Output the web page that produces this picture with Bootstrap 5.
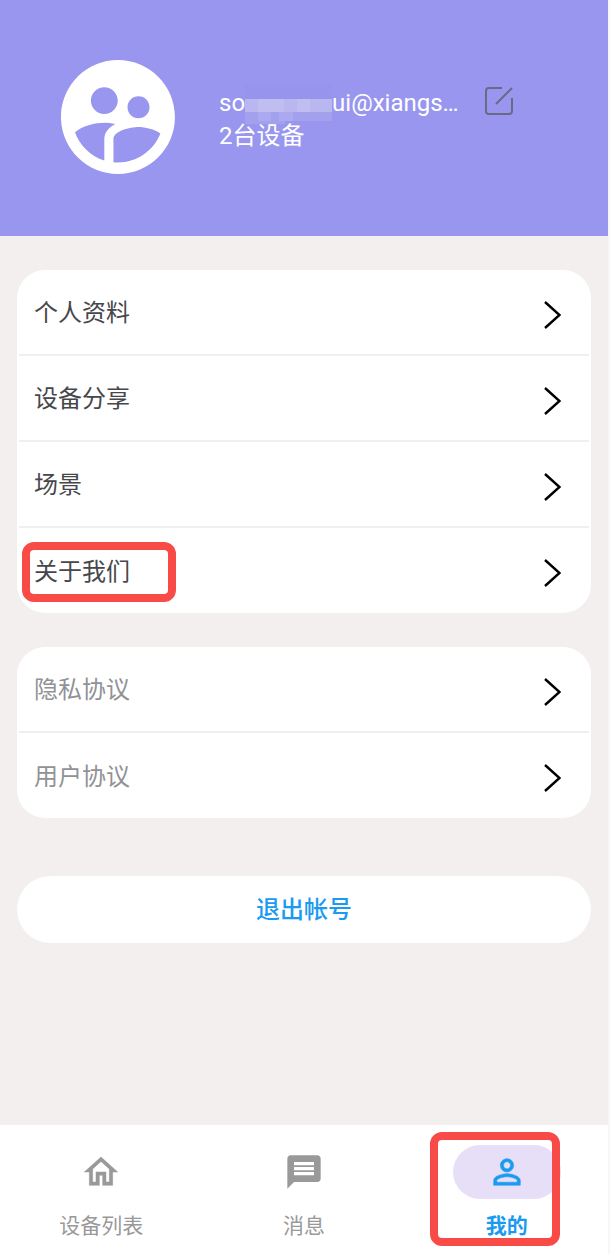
<!DOCTYPE html>
<html lang="zh-CN">
<head>
<meta charset="utf-8">
<meta name="viewport" content="width=device-width, initial-scale=1">
<title>我的</title>
<link rel="stylesheet" href="https://cdn.jsdelivr.net/npm/bootstrap@5.3.0/dist/css/bootstrap.min.css">
<style>
  body { font-family: Roboto, "Noto Sans CJK SC", sans-serif; font-size: 24px; line-height: 33px; background: #f7f7f8; }
  .screen { background: #f3efef; margin-right: 2px; }
  .hero { background: #9896ee; padding: 60px 61px 62px; }
  .avatar { width: 114px; height: 114px; margin-right: 44px; }
  .hero-col { padding-top: 27px; }
  .mask { width: 87px; height: 40px; margin: -10px 0; vertical-align: -3px; }
  .edit-btn { width: 28px; height: 28px; margin-left: 26px; color: #6b6a86; }
  .content { padding: 34px 17px; }
  .menu { border-radius: 28px; background: #fff; padding: 0 2px; margin-bottom: 34px; }
  .menu-row { height: 86px; padding: 3px 28px 0 15px; color: #47474b; border-bottom: 2px solid #efefef; }
  .menu-row:last-child { height: 85px; border-bottom: 0; }
  .menu-muted .menu-row { color: #919295; }
  .menu-row svg { width: 18px; height: 28px; color: #000; margin-top: 2px; }
  .logout { height: 67px; margin-top: 24px; border-radius: 34px; background: #fff; color: #1a9bf0; font-size: 24px; font-weight: 500; }
  .logout:hover { background: #fff; color: #1a9bf0; }
  .tabs { background: #fff; height: 130px; border-top: 1px solid #f0f0f2; padding-top: 20px; font-size: 21px; line-height: 30px; }
  .tab-link { color: #999; gap: 12px; }
  .tab-link.active { color: #1a9bf0; font-weight: 700; }
  .tab-icon { width: 108px; height: 54px; border-radius: 27px; }
  .active .tab-icon { background: #e7dff7; }
  .tab-icon svg { width: 40px; height: 40px; }
  .marker { border: 8px solid #f84b47; border-radius: 12px; pointer-events: none; }
  .marker-about { left: 3px; top: 14px; width: 154px; height: 60px; }
  .marker-me { left: 50%; top: -13px; width: 130px; height: 114px; margin-left: -77px; }
</style>
</head>
<body>
<div class="screen min-vh-100 d-flex flex-column">
  <header class="hero d-flex">
    <svg class="avatar flex-shrink-0" viewBox="2 2 20 20" fill="#fff" aria-hidden="true"><path d="M11.99 2c-5.52 0-10 4.48-10 10s4.48 10 10 10 10-4.48 10-10-4.48-10-10-10zm3.61 6.34c1.07 0 1.93.86 1.93 1.93 0 1.07-.86 1.93-1.93 1.93-1.07 0-1.93-.86-1.93-1.93-.01-1.07.86-1.93 1.93-1.93zm-6-1.58c1.3 0 2.36 1.06 2.36 2.36 0 1.3-1.06 2.36-2.36 2.36s-2.36-1.06-2.36-2.36c0-1.31 1.05-2.36 2.36-2.36zm0 9.13v3.75c-2.4-.75-4.3-2.6-5.14-4.96 1.05-1.12 3.67-1.69 5.14-1.69.53 0 1.2.08 1.9.22-1.64.87-1.9 2.02-1.9 2.68zM11.99 20c-.27 0-.53-.01-.79-.04v-4.07c0-1.42 2.94-2.13 4.4-2.13 1.07 0 2.92.39 3.84 1.15-1.17 2.97-4.06 5.09-7.45 5.09z"/></svg>
    <div class="hero-col text-white text-nowrap">
      <div>so<svg class="mask" viewBox="0 0 87 40" shape-rendering="crispEdges" aria-hidden="true"><path fill="#9694ec" d="M0 0h87v15H0z"/><path fill="#b9b6f0" d="M0 15h87v13H0z"/><path fill="#c0bdf1" d="M13 15h26v13H13zM52 15h13v13H52z"/><path fill="#a3a1ee" d="M0 28h87v9H40v3H0z"/><path fill="#aba9ef" d="M13 28h13v9H13zM34 28h14v9H34z"/></svg>ui@xiangs…</div>
      <div>2台设备</div>
    </div>
    <div class="hero-col"><button type="button" class="edit-btn btn border-0 p-0 d-block" aria-label="编辑"><svg class="d-block" width="28" height="28" viewBox="0 0 28 28" fill="none" stroke="currentColor" stroke-width="2"><path d="M17 1H4a3 3 0 0 0-3 3v20a3 3 0 0 0 3 3h20a3 3 0 0 0 3-3V11M11 17 27 1"/></svg></button></div>
  </header>

  <main class="content flex-grow-1">
    <nav class="menu">
      <a href="#" class="menu-row d-flex align-items-center justify-content-between text-decoration-none">个人资料<svg viewBox="0 0 18 28" fill="none" stroke="currentColor" stroke-width="2.4"><path d="M2 1 16.500 14 2 27"/></svg></a>
      <a href="#" class="menu-row d-flex align-items-center justify-content-between text-decoration-none">设备分享<svg viewBox="0 0 18 28" fill="none" stroke="currentColor" stroke-width="2.4"><path d="M2 1 16.500 14 2 27"/></svg></a>
      <a href="#" class="menu-row d-flex align-items-center justify-content-between text-decoration-none">场景<svg viewBox="0 0 18 28" fill="none" stroke="currentColor" stroke-width="2.4"><path d="M2 1 16.500 14 2 27"/></svg></a>
      <a href="#" class="menu-row position-relative d-flex align-items-center justify-content-between text-decoration-none">关于我们<svg viewBox="0 0 18 28" fill="none" stroke="currentColor" stroke-width="2.4"><path d="M2 1 16.500 14 2 27"/></svg><span class="marker marker-about position-absolute"></span></a>
    </nav>
    <nav class="menu menu-muted">
      <a href="#" class="menu-row d-flex align-items-center justify-content-between text-decoration-none">隐私协议<svg viewBox="0 0 18 28" fill="none" stroke="currentColor" stroke-width="2.4"><path d="M2 1 16.500 14 2 27"/></svg></a>
      <a href="#" class="menu-row d-flex align-items-center justify-content-between text-decoration-none">用户协议<svg viewBox="0 0 18 28" fill="none" stroke="currentColor" stroke-width="2.4"><path d="M2 1 16.500 14 2 27"/></svg></a>
    </nav>
    <button type="button" class="logout btn border-0 w-100">退出帐号</button>
  </main>

  <nav class="tabs row g-0">
    <div class="col-4"><a href="#" class="tab-link d-flex flex-column align-items-center text-decoration-none">
      <span class="tab-icon d-flex align-items-center justify-content-center"><svg viewBox="0 0 24 24" fill="currentColor" stroke="currentColor" stroke-width=".3"><path d="M12 5.69l5 4.5V18h-2v-6H9v6H7v-7.81l5-4.5M12 3L2 12h3v8h6v-6h2v6h6v-8h3L12 3z"/></svg></span>设备列表</a></div>
    <div class="col-4"><a href="#" class="tab-link d-flex flex-column align-items-center text-decoration-none">
      <span class="tab-icon d-flex align-items-center justify-content-center"><svg viewBox="0 0 24 24" fill="currentColor"><path d="M20 2H4c-1.100 0-1.990.9-1.990 2L2 22l4-4h14c1.100 0 2-.9 2-2V4c0-1.100-.9-2-2-2zm-2 12H6v-2h12v2zm0-3H6V9h12v2zm0-3H6V6h12v2z"/></svg></span>消息</a></div>
    <div class="col-4 position-relative"><a href="#" class="tab-link active d-flex flex-column align-items-center text-decoration-none" aria-current="page">
      <span class="tab-icon d-flex align-items-center justify-content-center"><svg viewBox="0 0 24 24" fill="currentColor" stroke="currentColor" stroke-width=".3"><path d="M12 5.900c1.160 0 2.100.94 2.100 2.100s-.94 2.100-2.100 2.100S9.900 9.160 9.900 8s.94-2.100 2.100-2.100m0 9c2.970 0 6.100 1.460 6.100 2.100v1.100H5.900V17c0-.64 3.130-2.100 6.100-2.100M12 4C9.790 4 8 5.790 8 8s1.790 4 4 4 4-1.790 4-4-1.790-4-4-4zm0 9c-2.670 0-8 1.340-8 4v3h16v-3c0-2.660-5.330-4-8-4z"/></svg></span>我的</a>
      <span class="marker marker-me position-absolute"></span></div>
  </nav>
</div>
<script src="https://cdn.jsdelivr.net/npm/bootstrap@5.3.0/dist/js/bootstrap.bundle.min.js"></script>
</body>
</html>
